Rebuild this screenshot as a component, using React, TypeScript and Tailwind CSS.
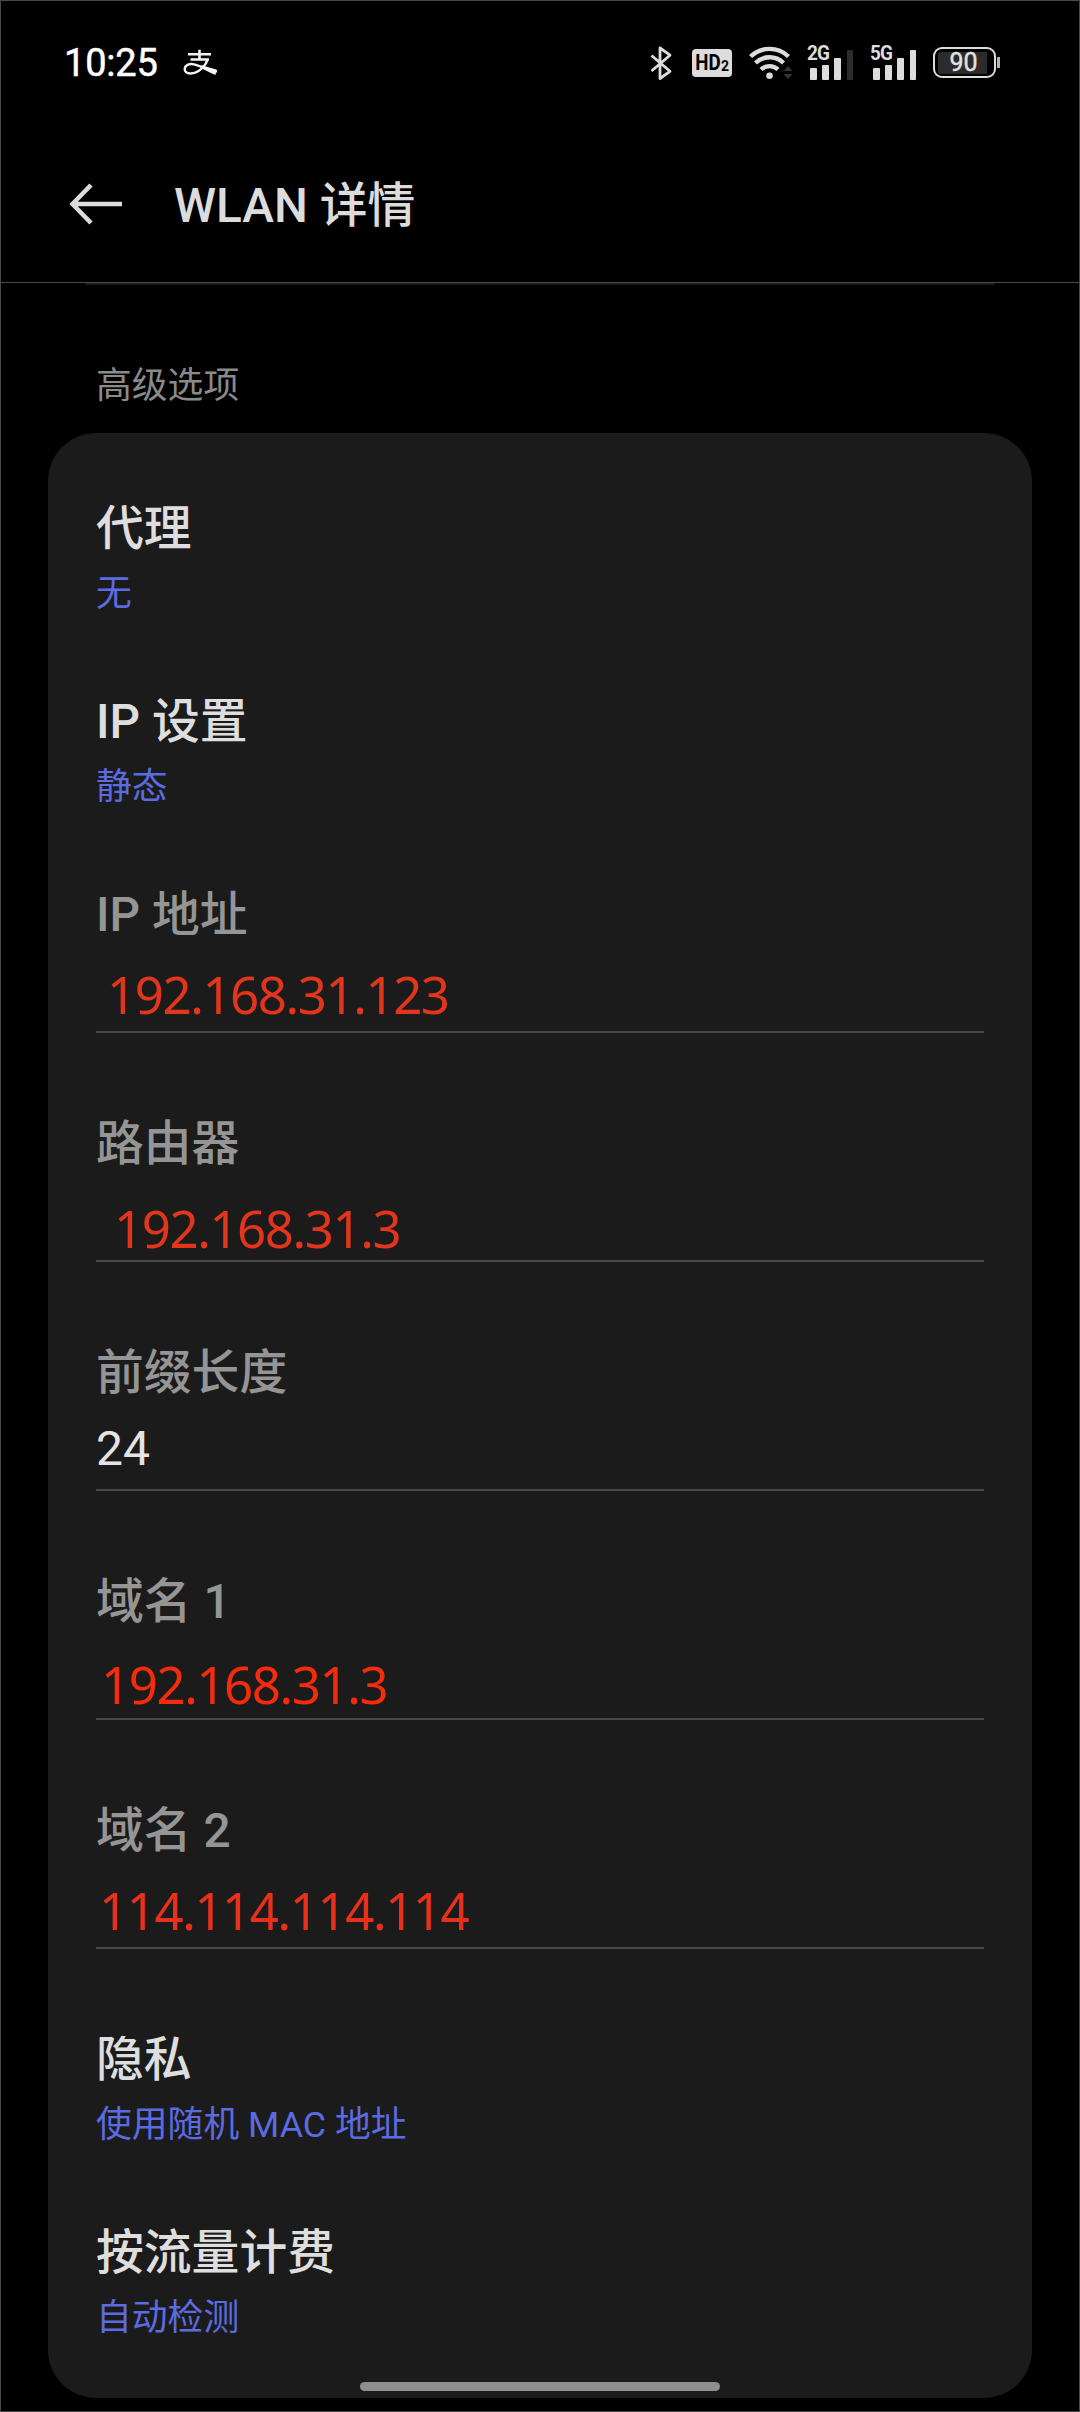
import clsx from "clsx";

type NavItem = { kind: "nav"; title: string; value: string };
type FieldItem = { kind: "field"; label: string; value: string; valueClass: string };

const red = "font-['Noto_Sans',sans-serif] text-[51px] tracking-[-1.45px]";

const items: (NavItem | FieldItem)[] = [
  { kind: "nav", title: "代理", value: "无" },
  { kind: "nav", title: "IP 设置", value: "静态" },
  { kind: "field", label: "IP 地址", value: "192.168.31.123", valueClass: `${red} text-[#e2351b] pl-[11px] pt-[15px]` },
  { kind: "field", label: "路由器", value: "192.168.31.3", valueClass: `${red} text-[#e2351b] pl-[18px] pt-[20px]` },
  { kind: "field", label: "前缀长度", value: "24", valueClass: "text-[48px] text-[#e4e4e4] pt-[12px]" },
  { kind: "field", label: "域名 1", value: "192.168.31.3", valueClass: `${red} text-[#f52b0c] pl-[5px] pt-[18px]` },
  { kind: "field", label: "域名 2", value: "114.114.114.114", valueClass: `${red} text-[#e9301a] pl-[3px] pt-[15px]` },
  { kind: "nav", title: "隐私", value: "使用随机 MAC 地址" },
  { kind: "nav", title: "按流量计费", value: "自动检测" },
];

function Signal({ label, heights, dimLast }: { label: string; heights: number[]; dimLast?: boolean }) {
  return (
    <div className="w-12">
      <div className="h-[17px] text-[20px] leading-[15px] font-bold tracking-[-1px] text-[#dcdcdc]">
        <span className="-ml-px inline-block origin-left scale-x-95">{label}</span>
      </div>
      <div className="-mt-[13px] flex h-[30px] items-end gap-[5.6px] pl-[2px]">
        {heights.map((h, i) => (
          <div
            key={i}
            className={clsx("w-[6.6px] rounded-[1px]", dimLast && i === 3 ? "bg-[#2c2c2c]" : "bg-[#dcdcdc]")}
            style={{ height: h }}
          />
        ))}
      </div>
    </div>
  );
}

function StatusBar() {
  return (
    <div className="flex h-[123px] items-center pl-[63px] pr-[79px]">
      <span className="w-[95px] text-[38px] leading-none tracking-[-0.2px] whitespace-nowrap text-white [-webkit-text-stroke:0.5px_white]">
        10:25
      </span>
      <svg className="ml-6" width="36" height="28" viewBox="0 0 36 28" fill="none" stroke="#f4f4f4">
        <path d="M5 5.2H28M16.500 0.8V10.5M7.500 10.5H26" strokeWidth="2.600" />
        <path
          d="M24.500 10.500C22.500 17.500 15 24.500 7.500 24.500C3.500 24.500 1.500 22.400 1.700 20C2 16.200 6 14.200 11 15.300C18 17 25 20.500 34 22.500"
          strokeWidth="2.400"
        />
        <path d="M19 16.600L33.500 20.500L32.500 26C28 24.500 23 21.500 17 18.500Z" fill="#f4f4f4" stroke="none" />
      </svg>

      <div className="ml-auto flex items-center">
        <svg width="22" height="36" viewBox="0 0 22 36" fill="none" stroke="#dcdcdc" strokeWidth="2.800" strokeLinejoin="round">
          <path d="M1.500 10.500L20 26.300L10 33.500V3L20 10.200L1.500 26" />
        </svg>
        <div className="ml-5 flex h-7 w-10 items-center justify-center rounded bg-[#dcdcdc] font-bold text-black">
          <span className="-mx-0.5 scale-x-[0.85] text-[22px] leading-none">HD</span>
          <span className="pt-[7px] text-[14px] leading-none">2</span>
        </div>
        <svg className="ml-[17px]" width="45" height="36" viewBox="0 0 45 36" fill="none" stroke="#dcdcdc" strokeWidth="4.400">
          <path d="M1.500 11.500A27.500 27.500 0 0 1 39.500 11.500" />
          <path d="M6.500 18A20 20 0 0 1 34.500 18" />
          <path d="M12 24.500A12.500 12.500 0 0 1 29 24.500" />
          <circle cx="20.500" cy="30.800" r="3.300" fill="#dcdcdc" stroke="none" />
          <path d="M34.500 26L39 21L43.500 26ZM34.500 29L39 34L43.500 29Z" fill="#333" stroke="none" />
        </svg>
        <div className="ml-[14px]">
          <Signal label="2G" heights={[12, 15, 22, 30]} dimLast />
        </div>
        <div className="ml-[15px]">
          <Signal label="5G" heights={[12, 15, 22, 30]} />
        </div>
        <div className="ml-[14px] flex items-center gap-px">
          <div className="h-[31px] w-[63px] rounded-[9px] border-[2.8px] border-[#dcdcdc] p-[2.5px]">
            <div className="flex h-full items-center rounded-[3px] bg-linear-to-r from-[#2b2b2b] from-90% to-black to-90% pl-[12px] text-[25px] leading-none text-[#e2e2e2] [-webkit-text-stroke:0.4px_#e2e2e2]">
              90
            </div>
          </div>
          <div className="h-[11px] w-[3px] bg-[#b5b5b5]" />
        </div>
      </div>
    </div>
  );
}

function NavRow({ title, value }: NavItem) {
  return (
    <div className="h-[193px] pt-16">
      <div className="h-16 text-[47.8px] leading-[64px] font-medium text-[#dedede]">{title}</div>
      <div className="mt-[9px] h-12 text-[35.8px] leading-[48px] text-[#5b6be0]">{value}</div>
    </div>
  );
}

function FieldRow({ label, value, valueClass }: FieldItem) {
  return (
    <div className="h-[229px] pt-16">
      <div className="h-[150px] border-b-2 border-[#484848]">
        <div className="h-16 text-[47.8px] leading-[64px] font-medium text-[#959595]">{label}</div>
        <div className={clsx("leading-[64px] whitespace-nowrap", valueClass)}>{value}</div>
      </div>
    </div>
  );
}

export default function App() {
  return (
    <div className="relative h-[2412px] w-[1080px] overflow-hidden border border-[#484848] bg-black font-[Roboto,'Noto_Sans_CJK_SC',sans-serif]">
      <StatusBar />

      <header className="flex h-[159px] items-center border-b border-[#4a4a4a] pt-[2px] pl-[68px]">
        <svg width="54" height="42" viewBox="0 0 54 42" fill="none" stroke="#dcdcdc" strokeWidth="4.500">
          <path d="M53 21H4M22 2L3.500 21L22 40" />
        </svg>
        <h1 className="ml-[51px] pt-[3px] text-[47.8px] leading-[64px] font-medium text-[#dcdcdc]">WLAN 详情</h1>
      </header>

      {/* bottom edge of the card scrolled under the header */}
      <div className="mx-[84px] h-0.5 rounded-b-full bg-[#1b1b1b]" />

      <div className="flex h-[148px] items-end pb-[23px] pl-[95px] text-[35.8px] leading-[48px] text-[#8a8a8a]">高级选项</div>

      <main className="mx-[47px] h-[1965px] rounded-[48px] bg-[#1b1b1b] px-12">
        {items.map((item) =>
          item.kind === "nav" ? <NavRow key={item.title} {...item} /> : <FieldRow key={item.label} {...item} />
        )}
      </main>

      {/* gesture bar */}
      <div className="absolute bottom-5 left-[359px] h-[9px] w-[360px] rounded-full bg-[#8e8e8e]" />
    </div>
  );
}
